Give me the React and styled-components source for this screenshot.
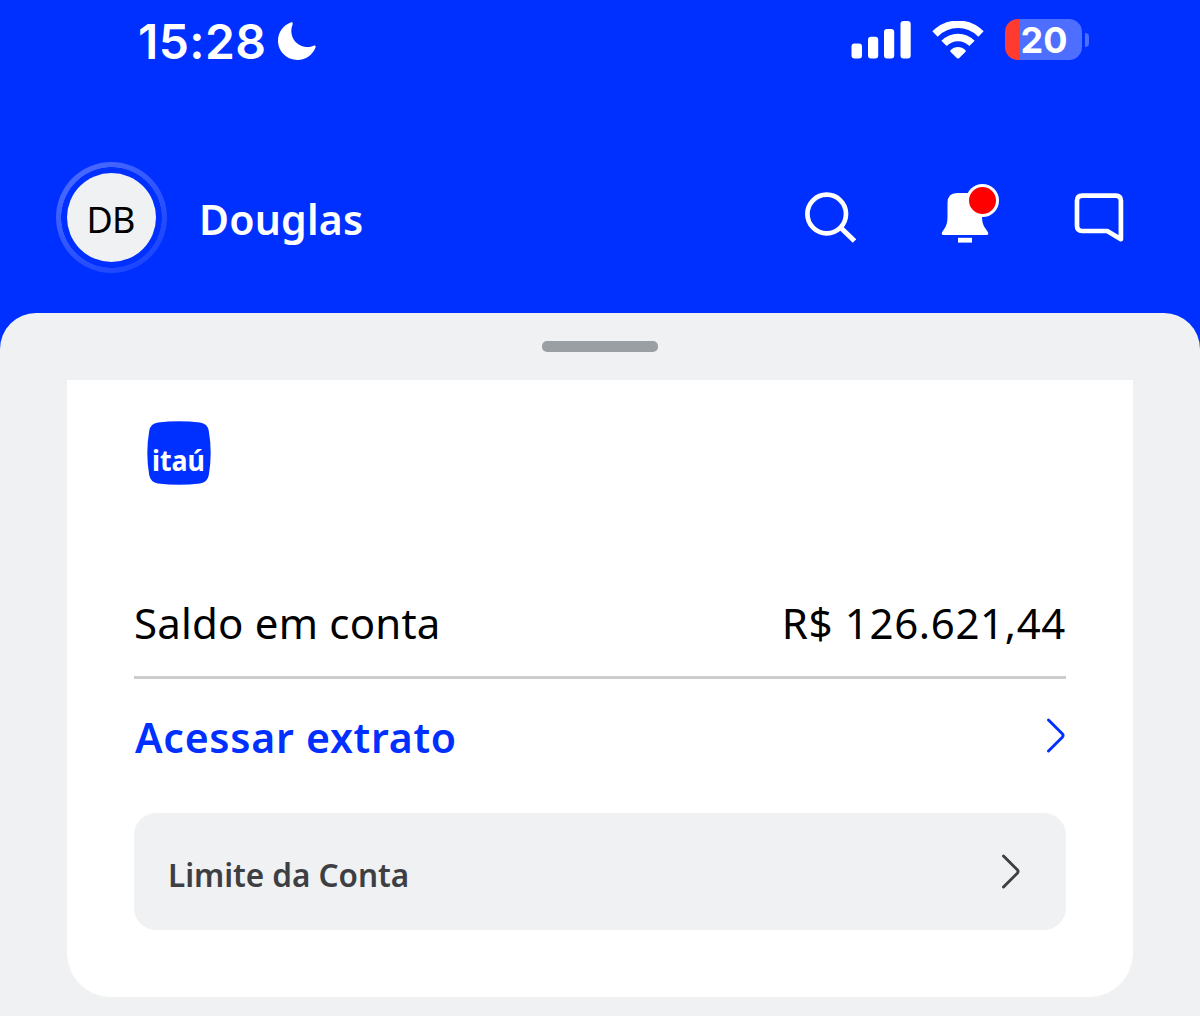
import React from 'react'
import styled, { createGlobalStyle } from 'styled-components'


const App = () => {
    return (
        <Screen>
            <GlobalStyle />
            <StatusBar>
                <Time>15:28</Time>
                <MoonIcon />
                <StatusIcons>
                    <SignalIcon />
                    <WifiIcon />
                    <Battery>
                        <BatteryBody>20</BatteryBody>
                        <BatteryTip />
                    </Battery>
                </StatusIcons>
            </StatusBar>

            <Header>
                <AvatarRing>
                    <Avatar>DB</Avatar>
                </AvatarRing>
                <UserName>Douglas</UserName>
                <Actions>
                    <IconButton aria-label='Buscar'><SearchIcon /></IconButton>
                    <IconButton aria-label='Avisos'>
                        <BellIcon />
                        <Badge />
                    </IconButton>
                    <IconButton aria-label='Mensagens'><ChatIcon /></IconButton>
                </Actions>
            </Header>

            <Sheet>
                <Handle />
                <Card>
                    <Logo />
                    <BalanceRow>
                        <BalanceText $spacing='0.2px'>Saldo em conta</BalanceText>
                        <BalanceText $spacing='0.65px'>R$ 126.621,44</BalanceText>
                    </BalanceRow>
                    <StatementLink>
                        <StatementText>Acessar extrato</StatementText>
                        <Chevron />
                    </StatementLink>
                    <LimitButton>
                        <LimitText>Limite da Conta</LimitText>
                        <Chevron />
                    </LimitButton>
                </Card>
            </Sheet>
        </Screen>
    )
}

export default App

const MoonIcon = () => (
    <Moon width='38' height='38' viewBox='0 0 38 38'>
        <path fill='#fff' d='M12.800.4C14.200 0 15.100.9 14.600 2.400 13.300 5.400 13 8.600 13.600 11.900 15 19.600 21.600 24.600 29 25 31.400 25.100 33.600 24.600 35.500 23.800 37 23.200 38.100 24.100 37.500 25.600 34.600 33 27.800 38 19.600 38 8.800 38 0 29.400 0 18.800 0 10.200 5.200 3.200 12.800.4Z' />
    </Moon>
)

const SignalIcon = () => (
    <svg width='60' height='38' viewBox='0 0 60 38' fill='#fff'>
        <rect x='0.500' y='22.500' width='10.500' height='15' rx='3' />
        <rect x='17' y='15.700' width='10.200' height='21.800' rx='3' />
        <rect x='33' y='8' width='10.200' height='29.500' rx='3' />
        <rect x='49.500' y='0' width='10.200' height='37.500' rx='3' />
    </svg>
)

const WifiIcon = () => (
    <svg width='52' height='38' viewBox='0 0 52 38' fill='none' stroke='#fff' strokeWidth='7.500'>
        <path d='M3 13C16 0 36 0 49 13' />
        <path d='M12 22.400C20 14.400 32 14.400 40 22.400' />
        <path fill='#fff' stroke='none' d='M18.700 28.900C22.800 25 29.200 25 33.300 28.900 33.900 29.600 33.900 30.200 33.300 30.900L27 37.200Q26 38 25 37.200L18.700 30.900C18.100 30.200 18.100 29.600 18.700 28.900Z' />
    </svg>
)

const SearchIcon = () => (
    <svg width='54' height='54' viewBox='0 0 54 54' fill='none' stroke='#fff' strokeWidth='4.700'>
        <circle cx='24.700' cy='23' r='19.300' />
        <path d='M38.500 36.500 52.500 50' strokeWidth='5' />
    </svg>
)

const BellIcon = () => (
    <svg width='54' height='54' viewBox='0 0 54 54' fill='#fff'>
        <path d='M20 2H35Q45 2 45 12V25C45 31 46 34 48.500 37.500L50.800 41Q52.200 43.900 49.500 43.900H6.500Q3.800 43.900 5.200 41L7.500 37.500C9.800 34 10.500 31 10.500 25V12Q10.500 2 20 2Z' />
        <rect x='21' y='46.800' width='14' height='4.800' />
    </svg>
)

const ChatIcon = () => (
    <svg width='54' height='54' viewBox='0 0 54 54' fill='none' stroke='#fff' strokeWidth='4.700' strokeLinejoin='round'>
        <path d='M10.200 4.600H43.700Q48.900 4.600 48.900 9.800V48.200L35.200 40H10.200Q5 40 5 34.800V9.800Q5 4.600 10.200 4.600Z' />
    </svg>
)

const Chevron = () => (
    <svg width='20' height='36' viewBox='0 0 20 36' fill='none' stroke='currentColor' strokeWidth='2.900' strokeLinecap='round' strokeLinejoin='round'>
        <path d='M2.500 2 16.300 15.800Q17.800 17.500 16.300 19.200L2.500 33' />
    </svg>
)

const Logo = () => (
    <LogoSvg width='64' height='64' viewBox='0 0 64 64'>
        <path fill='#0030ff' d='M11 1.600Q32-1.200 53 1.600Q60.500 2.600 61.800 10Q65.600 32 61.800 54Q60.500 61.400 53 62.400Q32 65.200 11 62.400Q3.500 61.400 2.200 54Q-1.600 32 2.200 10Q3.500 2.600 11 1.600Z' />
        <text x='5' y='50' textLength='53' lengthAdjust='spacingAndGlyphs'>itaú</text>
    </LogoSvg>
)

const GlobalStyle = createGlobalStyle`
    * {
        box-sizing: border-box;
    }
    body {
        margin: 0;
        background: #f0f1f3;
        font-family: 'Noto Sans', sans-serif;
    }
    svg {
        display: block;
        flex-shrink: 0;
    }
    button {
        border: 0;
        padding: 0;
        background: none;
        font: inherit;
    }
`

const Screen = styled.div`
    display: flex;
    flex-direction: column;
    width: 1200px;
    height: 1016px;
    overflow: hidden;
    background: #0030ff;
`

const StatusBar = styled.div`
    display: flex;
    align-items: center;
    height: 79px;
    padding: 0 111px 0 138px;
    color: #fff;
    font-family: Inter, sans-serif;
`

const Time = styled.div`
    width: 128px;
    padding-top: 4px;
    font-size: 48px;
    font-weight: 600;
    line-height: 58px;
    letter-spacing: 0.400px;
    white-space: nowrap;
`

const Moon = styled.svg`
    margin: 3px 0 0 12px;
`

const StatusIcons = styled.div`
    display: flex;
    align-items: center;
    gap: 21px;
    margin-left: auto;
`

const Battery = styled.div`
    display: flex;
    align-items: center;
    gap: 3px;
`

const BatteryBody = styled.div`
    width: 77px;
    height: 41px;
    padding-left: 1px;
    border-radius: 13px;
    background: linear-gradient(90deg, #ff3b30 15.500px, #4d6eff 15.500px);
    font-size: 36px;
    font-weight: 700;
    line-height: 42px;
    text-align: center;
`

const BatteryTip = styled.div`
    width: 4px;
    height: 14px;
    border-radius: 0 5px 5px 0;
    background: #4d6eff;
`

const Header = styled.header`
    display: flex;
    align-items: center;
    height: 234px;
    padding: 43px 74px 0 56px;
    color: #fff;
`

const AvatarRing = styled.div`
    width: 111px;
    height: 111px;
    padding: 11px;
    border-radius: 50%;
    background: radial-gradient(circle, #0030ff 50px, transparent 50.500px), linear-gradient(145deg, #5070ff 0%, #2c53ff 55%, #1440ff 100%);
`

const Avatar = styled.div`
    display: flex;
    align-items: center;
    justify-content: center;
    height: 89px;
    padding: 5px 2px 0 0;
    border-radius: 50%;
    background: #f0f1f3;
    color: #000;
    font-size: 36px;
    line-height: 44px;
    letter-spacing: -0.800px;
`

const UserName = styled.div`
    margin-left: 32px;
    padding-top: 3px;
    font-size: 41px;
    font-weight: 600;
    line-height: 56px;
    letter-spacing: 0.200px;
`

const Actions = styled.div`
    display: flex;
    gap: 81px;
    margin-left: auto;
`

const IconButton = styled.button`
    position: relative;
    width: 54px;
    height: 54px;
`

const Badge = styled.span`
    position: absolute;
    top: -7px;
    right: -8px;
    width: 33px;
    height: 33px;
    border: 3px solid #fff;
    border-radius: 50%;
    background: #f00;
`

const Sheet = styled.main`
    flex: 1;
    display: flex;
    flex-direction: column;
    align-items: center;
    padding-top: 28px;
    border-radius: 36px 36px 0 0;
    background: #f0f1f3;
`

const Handle = styled.div`
    width: 116px;
    height: 11px;
    margin-bottom: 28px;
    border-radius: 5px;
    background: #9a9fa3;
`

const Card = styled.section`
    width: 1066px;
    height: 617px;
    padding: 40.500px 67px 0;
    border-radius: 0 0 44px 44px;
    background: #fff;
`

const LogoSvg = styled.svg`
    margin-left: 12.500px;

    text {
        fill: #fff;
        font-size: 29px;
        font-weight: 700;
    }
`

const BalanceRow = styled.div`
    display: flex;
    justify-content: space-between;
    margin-top: 108.500px;
    padding-bottom: 23px;
    border-bottom: 3px solid #cdcdcd;
`

const BalanceText = styled.div`
    font-size: 42px;
    line-height: 60px;
    letter-spacing: ${props => props.$spacing};
    color: #000;
`

const StatementLink = styled.button`
    display: flex;
    align-items: center;
    justify-content: space-between;
    width: 100%;
    height: 114px;
    margin-bottom: 20px;
    padding-left: 1px;
    color: #0030ff;
`

const StatementText = styled.span`
    padding-top: 2px;
    font-size: 41px;
    font-weight: 600;
    letter-spacing: 0.750px;
`

const LimitButton = styled.button`
    display: flex;
    align-items: center;
    justify-content: space-between;
    width: 100%;
    height: 117px;
    padding: 0 45px 0 34px;
    border-radius: 22px;
    background: #f0f1f3;
    color: #3e3f43;
`

const LimitText = styled.span`
    padding-top: 5px;
    font-size: 31.500px;
    font-weight: 600;
    letter-spacing: -0.050px;
`
